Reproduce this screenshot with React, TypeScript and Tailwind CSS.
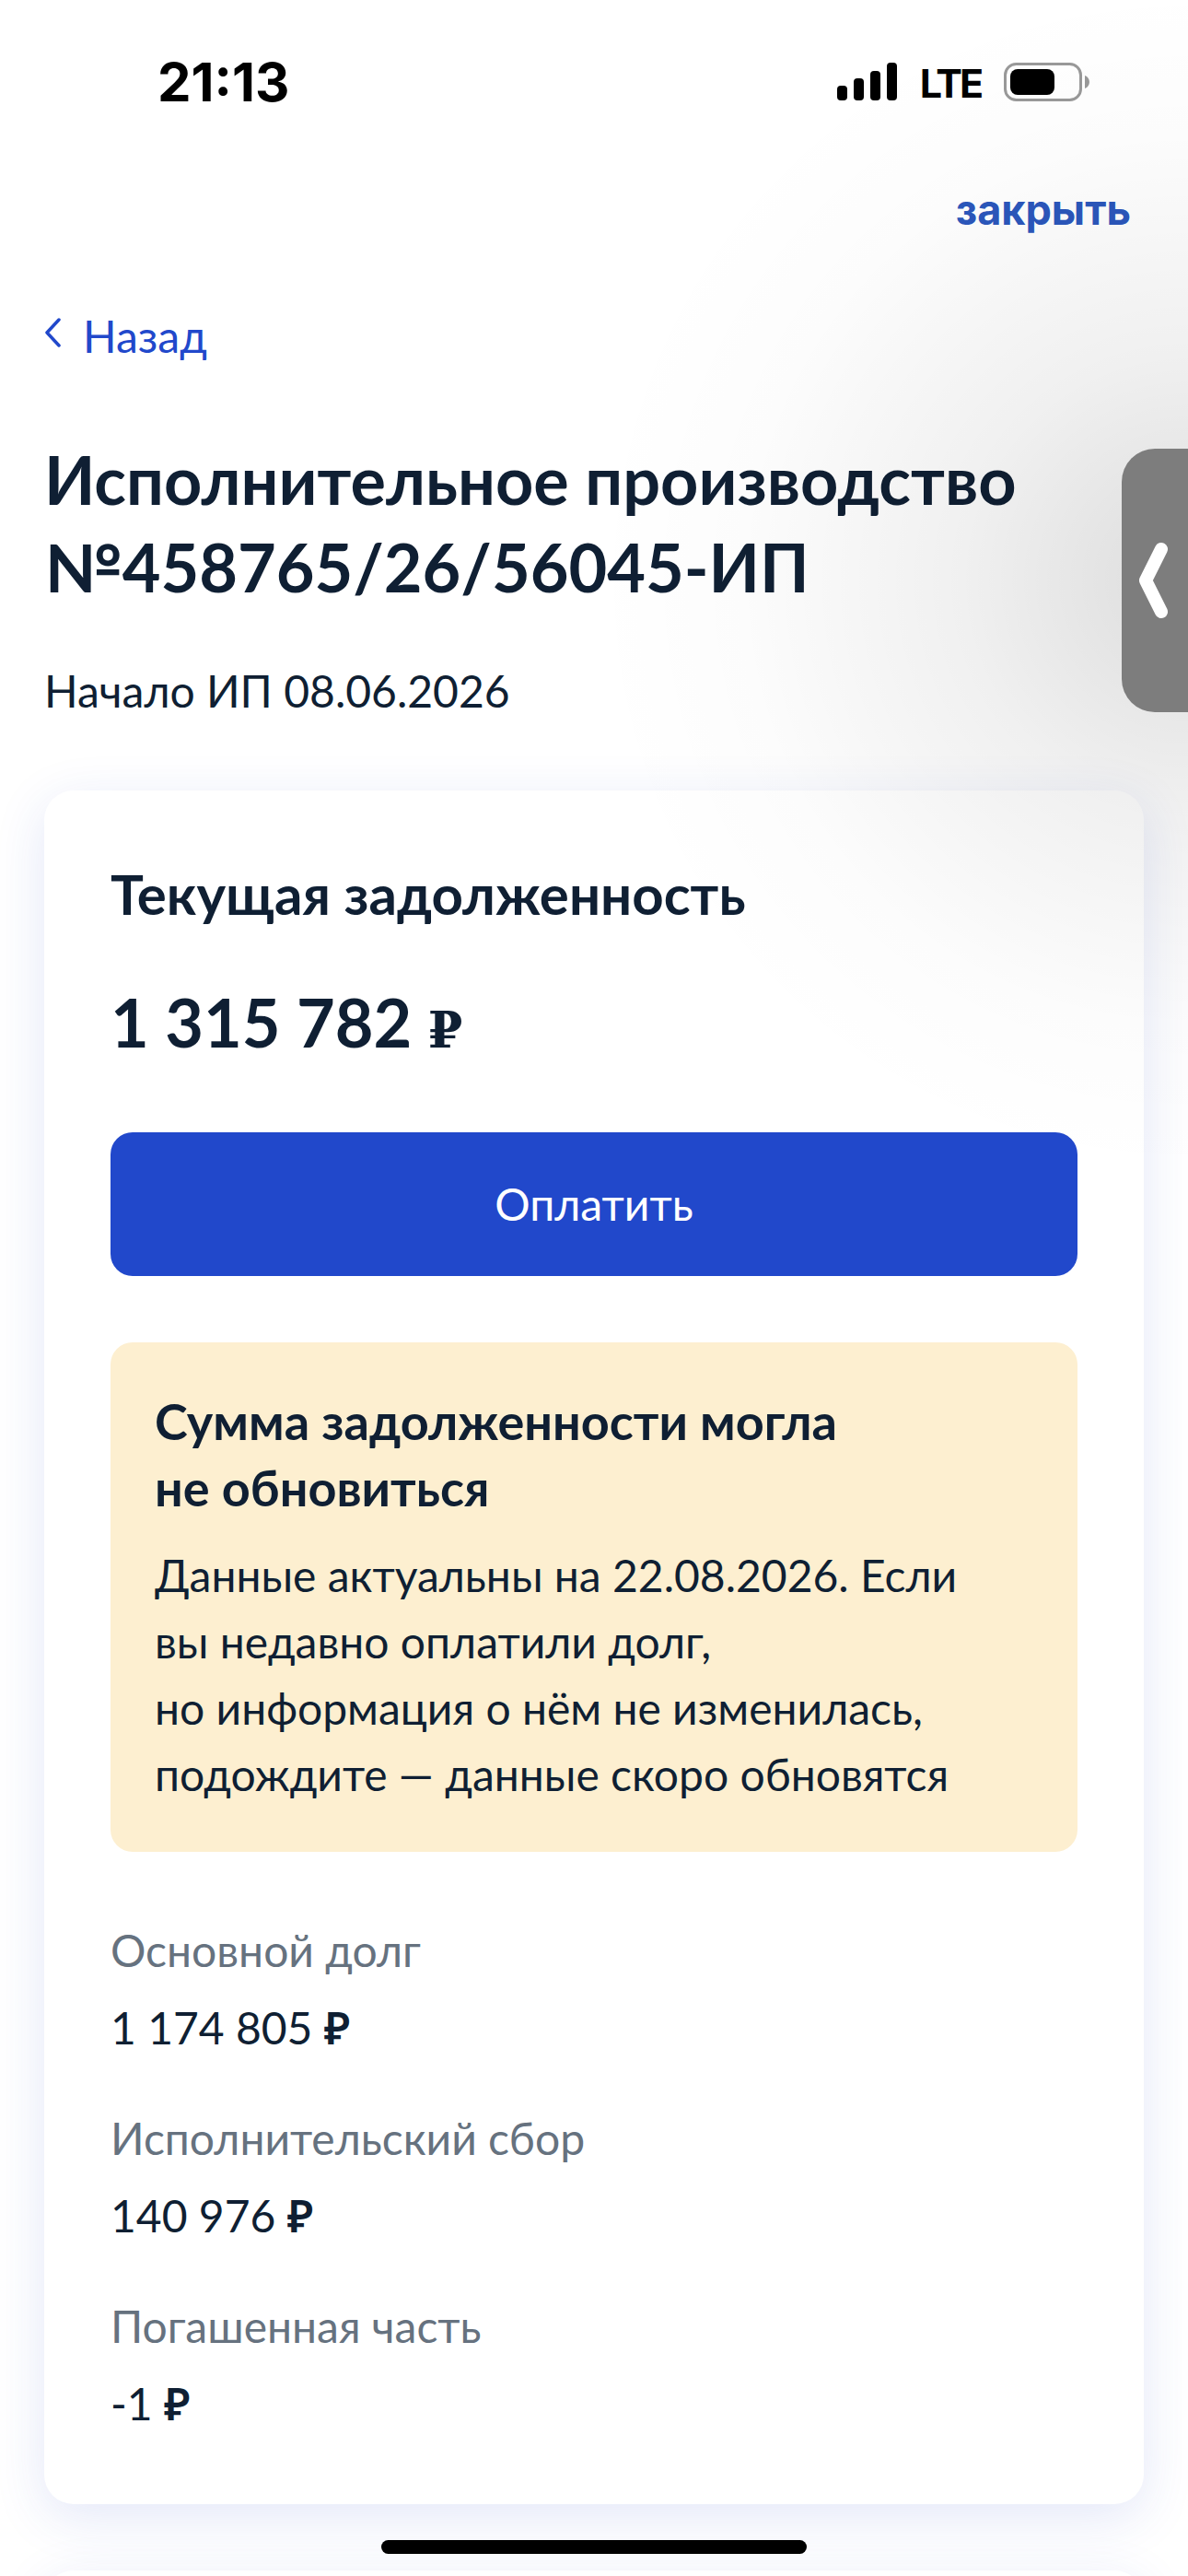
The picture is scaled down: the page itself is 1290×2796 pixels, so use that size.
const LATO = "font-['Lato','Noto_Sans',sans-serif]";

const ITEMS = [
  { label: "Основной долг", value: "1 174 805" },
  { label: "Исполнительский сбор", value: "140 976" },
  { label: "Погашенная часть", value: "-1" },
];

function StatusBar() {
  return (
    <div className="flex h-[203px] items-start justify-between pl-[171px] pr-[106px] pt-[54px]">
      <span className="font-['Inter',sans-serif] text-[58px] font-bold leading-[70px] text-black">
        21:13
      </span>
      <div className="flex items-center gap-[25px] pt-[12px]">
        <svg width="65" height="41" viewBox="0 0 65 41" fill="#000">
          <rect x="0" y="25" width="11" height="16" rx="4" />
          <rect x="18" y="17" width="11" height="24" rx="4" />
          <rect x="36" y="9" width="11" height="32" rx="4" />
          <rect x="54" y="0" width="11" height="41" rx="4" />
        </svg>
        <span className="pt-[3px] font-['Inter',sans-serif] text-[43px] font-bold leading-[42px] tracking-[-3px] text-black">LTE</span>
        <svg width="94" height="42" viewBox="0 0 94 42">
          <rect x="1.5" y="1.5" width="82" height="39" rx="12" fill="none" stroke="#999" strokeWidth="3" />
          <rect x="7" y="7" width="48" height="28" rx="8" fill="#000" />
          <path d="M88 14c3 1 5 4 5 7s-2 6-5 7z" fill="#999" />
        </svg>
      </div>
    </div>
  );
}

export default function App() {
  return (
    <div className={`relative h-[2796px] w-[1290px] overflow-hidden bg-white ${LATO}`}>
      <div className="relative">
        <StatusBar />

        <div className="flex justify-end pr-[62px]">
          <span className="font-['Inter',sans-serif] text-[45px] font-bold leading-[50px] text-[#2b57bc]">закрыть</span>
        </div>

        <div className="mt-[84px] flex items-center gap-[23px] pl-[48px]">
          <svg width="19" height="32" viewBox="0 0 19 32" fill="none" stroke="#2148cb" strokeWidth="3.5" strokeLinecap="round" strokeLinejoin="round" className="mb-[8px]">
            <path d="M16 2 3 16l13 14" />
          </svg>
          <span className="text-[48px] leading-[56px] text-[#2148cb]">Назад</span>
        </div>

        <h1 className="mt-[80px] pl-[48px] text-[72px] font-bold leading-[95px] text-[#0f1f33]">
          Исполнительное производство
          <br />
          №458765/26/56045-ИП
        </h1>

        <p className="mt-[57px] pl-[48px] text-[48px] leading-[60px] text-[#0f1f33]">Начало ИП 08.06.2026</p>

        <section className="mx-[48px] mt-[78px] h-[1860px] rounded-[32px] bg-white px-[72px] pt-[76px] shadow-[0_14px_56px_rgba(40,70,200,0.13)]">
          <h2 className="text-[60px] font-bold leading-[72px] text-[#0f1f33]">Текущая задолженность</h2>
          <p className="mt-[59px] text-[72px] font-bold leading-[88px] text-[#0f1f33]">
            1 315 782 <span className="font-['DejaVu_Serif',serif] text-[54px]">₽</span>
          </p>

          <button className="mt-[67px] flex h-[156px] w-full items-center justify-center rounded-[24px] bg-[#2148cb] text-[48px] text-white">
            Оплатить
          </button>

          <div className="mt-[72px] rounded-[24px] bg-[#fdefd0] px-[48px] pb-[48px] pt-[50px] text-[#0f1f33]">
            <h3 className="text-[54px] font-bold leading-[72px]">
              Сумма задолженности могла
              <br />
              не обновиться
            </h3>
            <p className="mt-[23px] text-[48px] leading-[72px]">
              Данные актуальны на 22.08.2026. Если
              <br />
              вы недавно оплатили долг,
              <br />
              но информация о нём не изменилась,
              <br />
              подождите — данные скоро обновятся
            </p>
          </div>

          <dl className="mt-[77px] flex flex-col gap-[60px]">
            {ITEMS.map((item) => (
              <div key={item.label} className="flex flex-col gap-[24px]">
                <dt className="text-[48px] leading-[60px] text-[#66727f]">{item.label}</dt>
                <dd className="text-[48px] leading-[60px] text-[#0f1f33]">
                  {item.value} <span className="font-semibold">₽</span>
                </dd>
              </div>
            ))}
          </dl>
        </section>

        <div className="mx-[48px] mt-[72px] h-[100px] rounded-[32px] bg-white shadow-[0_14px_56px_rgba(40,70,200,0.13)]" />
      </div>

      {/* grey glow of the side handle, lies over the page and the card */}
      <div className="pointer-events-none absolute left-[640px] top-[-20px] h-[1300px] w-[1300px] bg-[radial-gradient(circle_closest-side,rgba(0,0,0,0.14)_0%,rgba(0,0,0,0.115)_11%,rgba(0,0,0,0.06)_38%,rgba(0,0,0,0.012)_75%,rgba(0,0,0,0)_100%)]" />

      {/* side handle */}
      <div className="absolute left-[1218px] top-[487px] flex h-[286px] w-[72px] items-center rounded-l-[36px] bg-[#7d7d7d] pl-[18px]">
        <svg width="34" height="86" viewBox="0 0 34 86" fill="none" stroke="#fff" strokeWidth="14" strokeLinecap="round" strokeLinejoin="round">
          <path d="M25 9 8 43l17 34" />
        </svg>
      </div>

      {/* home indicator */}
      <div className="absolute left-[414px] top-[2757px] h-[15px] w-[462px] rounded-full bg-black" />
    </div>
  );
}
